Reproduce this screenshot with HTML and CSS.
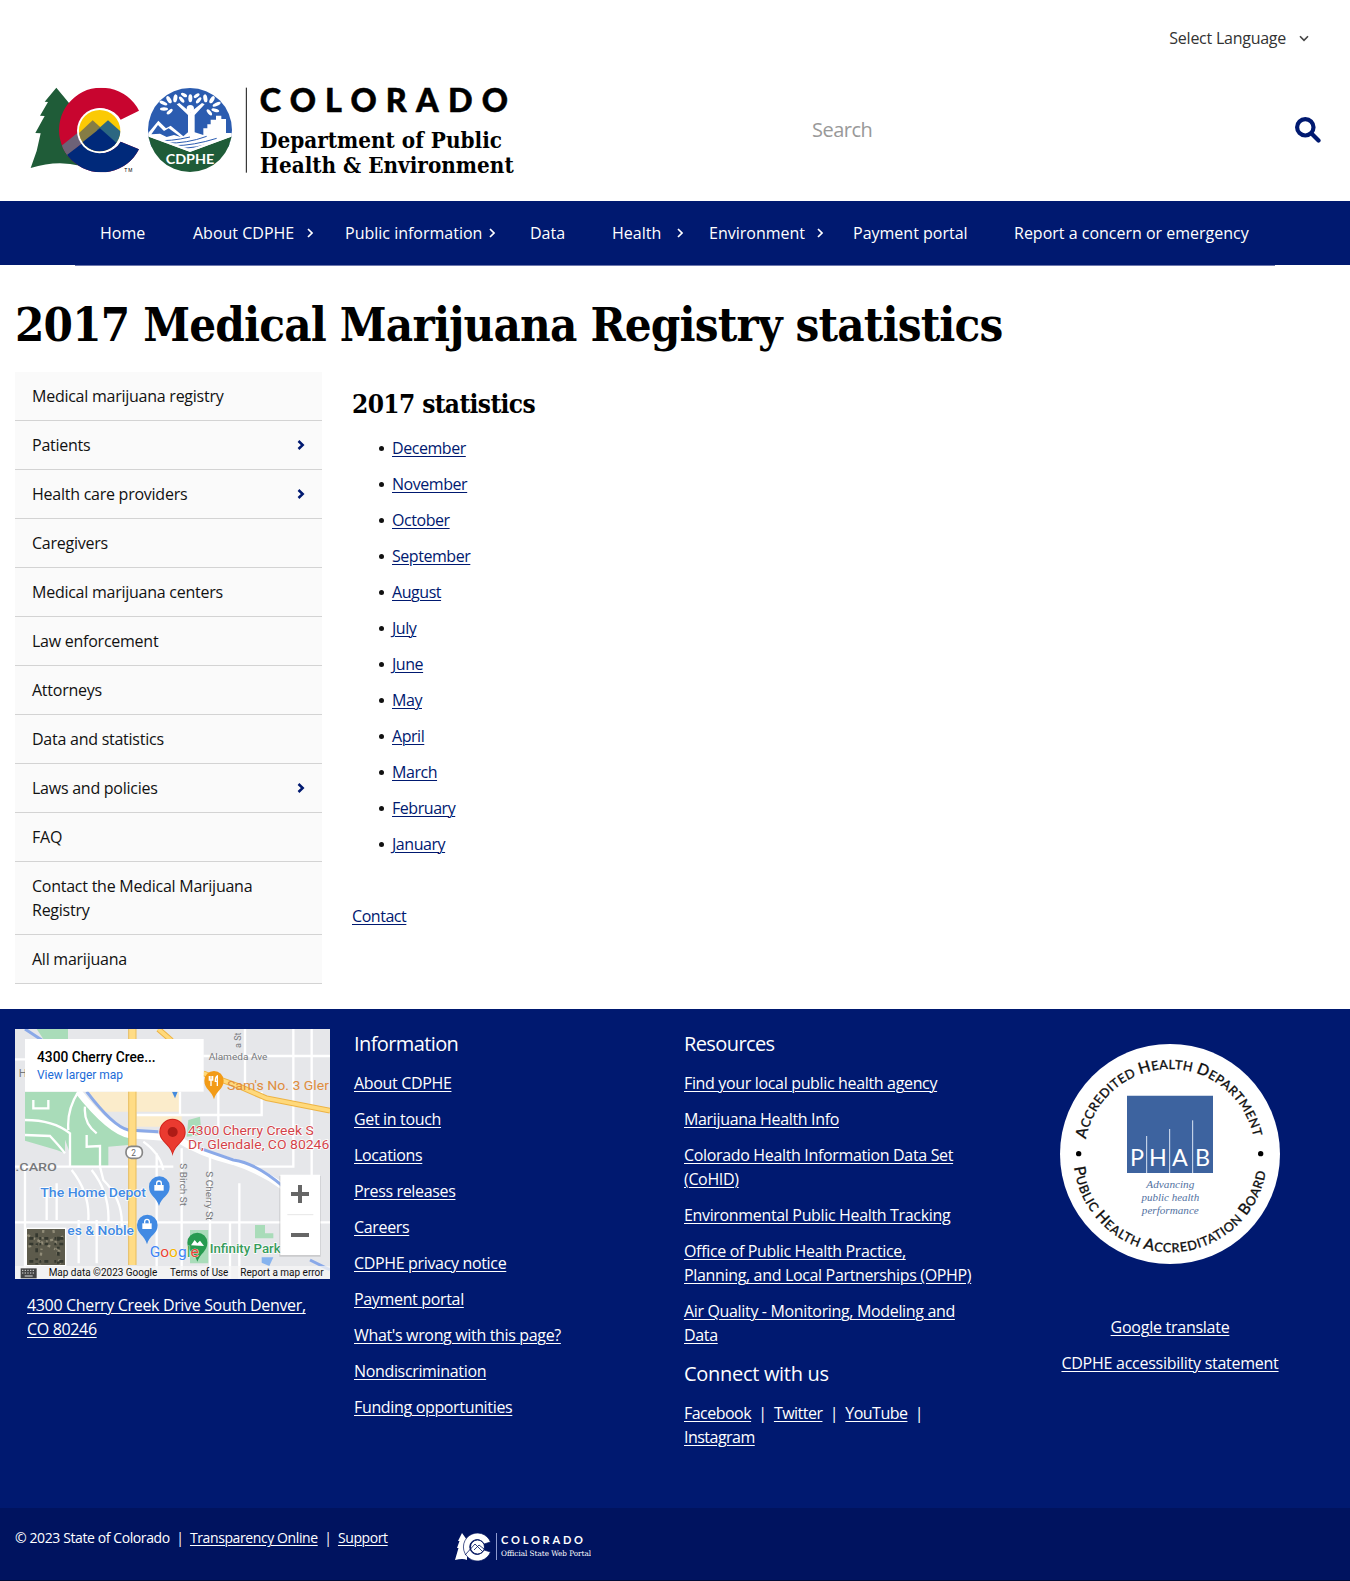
FILE: index.html
```html
<!DOCTYPE html>
<html lang="en">
<head>
<meta charset="utf-8">
<title>2017 Medical Marijuana Registry statistics</title>
<link rel="stylesheet" href="styles.css">
</head>
<body>
<header class="site-header">
  <div class="language">
    <span>Select Language</span>
    <svg class="chev-down" viewBox="0 0 10 7"><path d="M1 1.2 5 5.4 9 1.2"/></svg>
  </div>
  <div class="brand-row">
    <svg class="brand" viewBox="0 0 1500 330" role="img" aria-label="Colorado Department of Public Health and Environment">
      <defs>
        <clipPath id="cclip"><path d="M357 107A127 127 0 1 0 357 223L302 200A67 67 0 1 1 302 134Z"/></clipPath>
        <clipPath id="sun"><circle cx="239" cy="167" r="62"/></clipPath>
        <clipPath id="seal"><circle cx="510" cy="165" r="126"/></clipPath>
      </defs>
      <path fill="#1f5c38" d="M109 38 74 80 84 81 60 122 74 123 46 174 62 175 50 228 32 279Q110 254 180 272L210 160Z"/>
      <g clip-path="url(#cclip)">
        <rect x="100" y="30" width="270" height="270" fill="#c8052f"/>
        <path fill="#98526b" d="M110 230 218 136 250 170 142 242Z"/>
        <path fill="#6d6277" d="M110 224 190 160 200 190 142 242Z"/>
        <path fill="#00297a" d="M136 244 245 160 310 195H370V300H180Z"/>
      </g>
      <circle cx="239" cy="167" r="68" fill="#fff"/>
      <g clip-path="url(#sun)">
        <rect x="170" y="95" width="140" height="140" fill="#fbca04"/>
        <path fill="#857c45" d="M160 190 218 136 300 210 200 240Z"/>
        <path fill="#2c6781" d="M230 166 264 136 310 176 290 220Z"/>
        <path fill="#00297a" d="M174 212 240 160 310 222V250H174Z"/>
      </g>
      <text x="313" y="290" font-size="15" class="sans" textLength="24">TM</text>
      <g clip-path="url(#seal)">
        <rect x="380" y="35" width="260" height="180" fill="#2b5cb0"/>
        <path fill="#fff" d="M380 180 415 137 438 160 452 152 490 184 504 172V120L470 88 478 84 511 112 546 84 554 88 524 120V172L550 180V160H562V148H572V134H588V122H604V132H618V174H640V204L510 236 380 196Z"/>
        <path fill="#2b5cb0" d="M394 178 414 150 432 168 446 160 482 186 462 180 440 186 420 176Z"/>
        <circle cx="511" cy="101" r="11" fill="#fff"/>
        <g fill="#fff">
          <ellipse cx="432" cy="102" rx="12" ry="5"/><ellipse cx="430" cy="84" rx="13" ry="5" transform="rotate(25 430 84)"/><ellipse cx="447" cy="74" rx="12" ry="6" transform="rotate(60 447 74)"/><ellipse cx="466" cy="70" rx="12" ry="6" transform="rotate(100 466 70)"/><ellipse cx="449" cy="110" rx="11" ry="5" transform="rotate(-40 449 110)"/><ellipse cx="485" cy="74" rx="11" ry="5" transform="rotate(50 485 74)"/><ellipse cx="492" cy="60" rx="10" ry="5" transform="rotate(30 492 60)"/><ellipse cx="511" cy="70" rx="6" ry="12"/><ellipse cx="530" cy="62" rx="10" ry="5" transform="rotate(-35 530 62)"/><ellipse cx="536" cy="76" rx="11" ry="5" transform="rotate(-50 536 76)"/><ellipse cx="556" cy="70" rx="12" ry="6" transform="rotate(80 556 70)"/><ellipse cx="576" cy="74" rx="12" ry="6" transform="rotate(-60 576 74)"/><ellipse cx="590" cy="88" rx="13" ry="5" transform="rotate(-25 590 88)"/><ellipse cx="586" cy="106" rx="12" ry="5" transform="rotate(15 586 106)"/><ellipse cx="568" cy="112" rx="11" ry="5" transform="rotate(50 568 112)"/>
        </g>
        <path fill="none" stroke="#2b5cb0" stroke-width="3" d="M440 204Q500 206 560 184M462 212Q520 212 590 190M490 220Q530 218 570 206M410 196Q450 200 510 186"/>
        <path fill="#1f5c38" d="M380 182 510 230 640 182V300H380Z"/>
        <path fill="none" stroke="#fff" stroke-width="7" d="M380 179 510 227 640 179"/>
      </g>
      <text x="437" y="266" font-size="39" fill="#fff" class="geo" textLength="146" lengthAdjust="spacingAndGlyphs">CDPHE</text>
      <path stroke="#111" stroke-width="3" d="M679 38V293"/>
      <text x="719" y="111" font-size="97" class="geo heavy" textLength="745">COLORADO</text>
      <text x="720" y="218" font-size="66" class="slab" textLength="726" lengthAdjust="spacingAndGlyphs">Department of Public</text>
      <text x="720" y="293" font-size="66" class="slab" textLength="761" lengthAdjust="spacingAndGlyphs">Health &amp; Environment</text>
    </svg>
    <div class="search">
      <span>Search</span>
      <svg class="search-icon" viewBox="0 0 26 26"><circle cx="10.3" cy="10.3" r="8.2"/><path d="M16.5 16.5 23.5 23.5"/></svg>
    </div>
  </div>
</header>
<nav class="main-nav">
  <ul class="nav-list">
    <li>Home</li>
    <li>About CDPHE<svg class="arrow a1" viewBox="0 0 6 10"><path d="M1 1 5 5 1 9"/></svg></li>
    <li>Public information<svg class="arrow a2" viewBox="0 0 6 10"><path d="M1 1 5 5 1 9"/></svg></li>
    <li>Data</li>
    <li>Health<svg class="arrow a3" viewBox="0 0 6 10"><path d="M1 1 5 5 1 9"/></svg></li>
    <li>Environment<svg class="arrow a4" viewBox="0 0 6 10"><path d="M1 1 5 5 1 9"/></svg></li>
    <li>Payment portal</li>
    <li>Report a concern or emergency</li>
  </ul>
</nav>
<h1 class="title">2017 Medical Marijuana Registry statistics</h1>
<div class="columns">
  <ul class="side">
    <li>Medical marijuana registry</li>
    <li>Patients<svg class="side-arrow" viewBox="0 0 8 10"><path d="M1.5 1 5.7 5 1.5 9"/></svg></li>
    <li>Health care providers<svg class="side-arrow" viewBox="0 0 8 10"><path d="M1.5 1 5.7 5 1.5 9"/></svg></li>
    <li>Caregivers</li>
    <li>Medical marijuana centers</li>
    <li>Law enforcement</li>
    <li>Attorneys</li>
    <li>Data and statistics</li>
    <li>Laws and policies<svg class="side-arrow" viewBox="0 0 8 10"><path d="M1.5 1 5.7 5 1.5 9"/></svg></li>
    <li>FAQ</li>
    <li>Contact the Medical Marijuana<br>Registry</li>
    <li>All marijuana</li>
  </ul>
  <main class="content">
    <h2>2017 statistics</h2>
    <ul class="months">
      <li><a>December</a></li><li><a>November</a></li><li><a>October</a></li><li><a>September</a></li>
      <li><a>August</a></li><li><a>July</a></li><li><a>June</a></li><li><a>May</a></li>
      <li><a>April</a></li><li><a>March</a></li><li><a>February</a></li><li><a>January</a></li>
    </ul>
    <a>Contact</a>
  </main>
</div>
<footer class="footer">
  <div class="map-col">
    <svg class="map" viewBox="45 27 945 750">
      <rect x="45" y="27" width="945" height="750" fill="#e6e7ea"/>
      <path fill="#a9dcb9" d="M110 27H204V57H130ZM75 215H235L330 320 400 345 385 375 325 380V437H210V400L190 345H75ZM75 345H195V400L170 390 75 362ZM565 300 600 290 605 345 560 350ZM570 630H625V730H570ZM765 615H795V640H820V655H765Z"/>
      <path fill="#fbeccb" d="M260 215H540V275H300ZM410 285H545V320H410Z"/>
      <g fill="none" stroke="#fff" stroke-width="7">
        <path d="M45 118H75M610 108H990M540 215V285M410 285H785V215M655 200V330M735 27V200M880 27V440L760 440M45 440H520M45 607H990M545 385V777M718 490V777M935 27V480M75 440V777M140 500V600M170 490V600M236 600V730M290 600V730M785 240V285M470 400V777M630 400V777M690 607V777M100 240V265H145V240M235 215Q200 270 205 330M75 300Q160 300 210 340V437M75 345 150 348Q180 380 195 400M255 260Q250 310 290 340M260 345V380L300 378V437M300 440 310 480Q370 540 365 620M215 450Q270 520 265 600M275 450Q330 520 325 607M430 365Q480 400 490 450"/>
        <path stroke-width="20" d="M235 215Q330 335 390 345L530 355Q600 400 700 425 780 450 850 500"/>
      </g>
      <path fill="none" stroke="#8aa9e8" stroke-width="9" d="M75 27 140 70M260 215Q340 320 385 330L475 335M600 385 700 420Q770 430 850 500M930 720 990 750"/>
      <path fill="none" stroke="#e8bd5a" stroke-width="25" d="M397 27V735"/>
      <path fill="none" stroke="#ffdc85" stroke-width="19" d="M397 27V735"/>
      <path fill="none" stroke="#edb344" stroke-width="17" d="M475 27 515 62M610 160 720 200 800 235 990 272"/>
      <path fill="none" stroke="#ffd97b" stroke-width="11" d="M475 27 515 62M610 160 720 200 800 235 990 272"/>
      <rect x="378" y="379" width="49" height="36" rx="16" fill="#fff" stroke="#858585" stroke-width="5"/>
      <g class="rb">
        <text x="394" y="407" font-size="25" fill="#666">2</text>
        <g fill="#77797c">
          <text x="56" y="170" font-size="34">H</text>
          <text x="626" y="119" font-size="29" textLength="176" lengthAdjust="spacingAndGlyphs">Alameda Ave</text>
          <text transform="translate(722 84) rotate(-90)" font-size="27">a St</text>
          <text x="46" y="454" font-size="32" textLength="125" lengthAdjust="spacingAndGlyphs" class="med">.CARO</text>
          <text transform="translate(540 430) rotate(90)" font-size="27" textLength="128" lengthAdjust="spacingAndGlyphs">S Birch St</text>
          <text transform="translate(617 454) rotate(90)" font-size="27" textLength="147" lengthAdjust="spacingAndGlyphs">S Cherry St</text>
        </g>
        <text x="681" y="211" font-size="37" fill="#df8d3d" textLength="306" lengthAdjust="spacingAndGlyphs">Sam's No. 3 Gler</text>
        <g class="halo" fill="#d34349">
          <text x="564" y="345" font-size="40" textLength="377" lengthAdjust="spacingAndGlyphs">4300 Cherry Creek S</text>
          <text x="564" y="388" font-size="40" textLength="424" lengthAdjust="spacingAndGlyphs">Dr, Glendale, CO 80246</text>
        </g>
        <g class="halo med" fill="#418ae3">
          <text x="121" y="530" font-size="38" textLength="317" lengthAdjust="spacingAndGlyphs">The Home Depot</text>
          <text x="202" y="646" font-size="38" textLength="200" lengthAdjust="spacingAndGlyphs">es &amp; Noble</text>
        </g>
        <text x="629" y="698" font-size="38" fill="#369b5c" class="halo med" textLength="213" lengthAdjust="spacingAndGlyphs">Infinity Park</text>
      </g>
      <path fill="#d1231b" d="M518 408C512 372 478 368 478 336A39 39 0 0 1 557 336C557 368 524 372 518 408Z"/>
      <path fill="#ea3a30" d="M518 400C510 368 481 366 481 336A36 36 0 0 1 554 336C554 366 526 368 518 400Z"/>
      <circle cx="518" cy="336" r="15" fill="#ae1b16"/>
      <path fill="#f29b17" d="M642 238C636 212 613 208 613 182A29 29 0 0 1 671 182C671 208 648 212 642 238Z"/>
      <path fill="none" stroke="#fff" stroke-width="4" d="M628 168V180H638V168M633 168V198M652 198V168Q646 170 646 184H652"/>
      <path fill="#458bdd" d="M516 215H533L525 235Z"/>
      <g id="shop">
        <path fill="#418ae3" d="M477 558C470 530 447 528 447 500A31 31 0 0 1 509 500C509 528 484 530 477 558Z"/>
        <path fill="#fff" d="M463 495H491V512H463Z"/><path fill="none" stroke="#fff" stroke-width="4" d="M470 496V490A7 7 0 0 1 484 490V496"/>
      </g>
      <use href="#shop" x="-36" y="115"/>
      <path fill="#279b50" d="M592 725C586 700 562 694 562 668A30 30 0 0 1 622 668C622 694 600 700 592 725Z"/>
      <path fill="#fff" d="M573 676 584 660 592 670 600 662 612 678Z"/>
      <path fill="#86b3ee" d="M785 712H820L808 738 785 728Z"/>
      <rect x="75" y="57" width="536" height="158" fill="#fff"/>
      <g class="rb">
        <text x="111" y="126" font-size="42" class="med" textLength="356" lengthAdjust="spacingAndGlyphs">4300 Cherry Cree...</text>
        <text x="111" y="177" font-size="36" fill="#1a6bd8" textLength="258" lengthAdjust="spacingAndGlyphs">View larger map</text>
      </g>
      <path fill="#999" opacity=".35" d="M838 468H962V710H838Z"/>
      <path fill="#fff" d="M841 464H960V705H841Z"/>
      <path stroke="#e6e6e6" stroke-width="3" d="M862 584H940"/>
      <path stroke="#666" stroke-width="12" d="M873 522H927M900 495V549M873 645H927"/>
      <rect x="76" y="623" width="123" height="115" fill="#fff"/>
      <rect x="81" y="627" width="114" height="108" fill="#5d5b4c"/>
      <g stroke="#918c78" stroke-width="7" fill="none" stroke-dasharray="9 13 4 8"><path d="M82 645 190 700M130 630 120 733M85 680 190 650M160 630 180 733"/></g>
      <g stroke="#35382f" stroke-width="8" fill="none" stroke-dasharray="12 18 6 9"><path d="M88 655H190M88 672H190M88 724H190M110 640V733M175 650V733"/></g>
      <g class="rb" font-size="46" stroke="#fff" stroke-width="2" paint-order="stroke"><text x="449" y="711" textLength="147" lengthAdjust="spacingAndGlyphs"><tspan fill="#4285f4">G</tspan><tspan fill="#ea4335">o</tspan><tspan fill="#f4b400">o</tspan><tspan fill="#4285f4">g</tspan><tspan fill="#34a853">l</tspan><tspan fill="#ea4335">e</tspan></text></g>
      <rect x="45" y="738" width="945" height="39" fill="#f5f5f5" opacity=".75"/>
      <path fill="#444" d="M62 745H110V775H62Z"/><path stroke="#ddd" stroke-width="3" stroke-dasharray="4 4" d="M66 751H106M66 759H106"/><path stroke="#ddd" stroke-width="3" d="M74 768H98"/>
      <g class="rb" font-size="30" fill="#111">
        <text x="146" y="768" textLength="326" lengthAdjust="spacingAndGlyphs">Map data ©2023 Google</text>
        <text x="510" y="768" textLength="175" lengthAdjust="spacingAndGlyphs">Terms of Use</text>
        <text x="721" y="768" textLength="250" lengthAdjust="spacingAndGlyphs">Report a map error</text>
      </g>
    </svg>
    <p class="address"><a>4300 Cherry Creek Drive South Denver,</a><br><a>CO 80246</a></p>
  </div>
  <div class="links">
    <h3>Information</h3>
    <p><a>About CDPHE</a></p><p><a>Get in touch</a></p><p><a>Locations</a></p><p><a>Press releases</a></p><p><a>Careers</a></p>
    <p><a>CDPHE privacy notice</a></p><p><a>Payment portal</a></p><p><a>What's wrong with this page?</a></p><p><a>Nondiscrimination</a></p><p><a>Funding opportunities</a></p>
  </div>
  <div class="links">
    <h3>Resources</h3>
    <p><a>Find your local public health agency</a></p>
    <p><a>Marijuana Health Info</a></p>
    <p><a>Colorado Health Information Data Set<br>(CoHID)</a></p>
    <p><a>Environmental Public Health Tracking</a></p>
    <p><a>Office of Public Health Practice,<br>Planning, and Local Partnerships (OPHP)</a></p>
    <p><a>Air Quality - Monitoring, Modeling and<br>Data</a></p>
    <h3 class="connect">Connect with us</h3>
    <p class="social"><a>Facebook</a>&nbsp; | &nbsp;<a>Twitter</a>&nbsp; | &nbsp;<a>YouTube</a>&nbsp; |<br><a>Instagram</a></p>
  </div>
  <div class="accredit">
    <svg class="phab" viewBox="60 42 660 660">
      <defs>
        <path id="top" d="M138 328A256 256 0 0 1 642 328"/>
        <path id="bottom" d="M102 412A291 291 0 0 0 680 408"/>
      </defs>
      <circle cx="390" cy="372" r="330" fill="#fff"/>
      <g class="ring" font-size="38">
        <text textLength="706"><textPath href="#top" textLength="706"><tspan class="cap">A</tspan>CCREDITED <tspan class="cap">H</tspan>EALTH <tspan class="cap">D</tspan>EPARTMENT</textPath></text>
        <text><textPath href="#bottom" textLength="828"><tspan class="cap">P</tspan>UBLIC <tspan class="cap">H</tspan>EALTH <tspan class="cap">A</tspan>CCREDITATION <tspan class="cap">B</tspan>OARD</textPath></text>
      </g>
      <circle cx="116" cy="371" r="8"/><circle cx="662" cy="371" r="8"/>
      <path fill="#3d639f" d="M261 197H519V429H261Z"/>
      <path stroke="#dbe5f3" stroke-width="3" d="M320 318V429M389 297V429M458 271V429"/>
      <g font-size="70" fill="#fff" class="geo light"><text x="270" y="407">P</text><text x="327" y="407">H</text><text x="396" y="407">A</text><text x="465" y="407">B</text></g>
      <g font-size="33" fill="#52719f" class="tag" text-anchor="middle"><text x="391" y="475" textLength="144" lengthAdjust="spacingAndGlyphs">Advancing</text><text x="391" y="513" textLength="173" lengthAdjust="spacingAndGlyphs">public health</text><text x="391" y="552" textLength="171" lengthAdjust="spacingAndGlyphs">performance</text></g>
    </svg>
    <p><a>Google translate</a></p>
    <p><a>CDPHE accessibility statement</a></p>
  </div>
</footer>
<div class="bottom">
  <p>© 2023 State of Colorado&nbsp; | &nbsp;<a>Transparency Online</a>&nbsp; | &nbsp;<a>Support</a></p>
  <svg class="portal" viewBox="0 0 136 30">
    <path fill="#fff" d="M7 1 3 9H4.500L2 16H3.500L0 28Q8 26 12 28L12 8Z"/>
    <path fill="#fff" stroke="#00135f" stroke-width=".7" d="M35.500 10A14 14 0 1 0 35.500 20L29 18A7.500 7.500 0 1 1 29 12Z"/>
    <circle cx="22.500" cy="15" r="7" fill="#fff" stroke="#00135f" stroke-width=".9"/>
    <path fill="none" stroke="#00135f" stroke-width=".8" d="M10 23 20 12 28 20M19 18 24 13 29 17"/>
    <path stroke="#8d99cf" stroke-width="1" d="M41.500 1V28"/>
    <text x="46" y="12" font-size="11" fill="#fff" class="geo" textLength="82">COLORADO</text>
    <text x="46" y="24" font-size="7.500" fill="#fff" class="slab soft" textLength="90" lengthAdjust="spacingAndGlyphs">Official State Web Portal</text>
  </svg>
</div>
</body>
</html>
```
FILE: styles.css
```css
* { box-sizing: border-box; }
body { margin: 0; width: 1350px; background: #fff; color: #111; font: 400 16px/24px "Open Sans", sans-serif; letter-spacing: -.25px; }
ul, p, h1, h2, h3 { margin: 0; padding: 0; }
ul { list-style: none; }
svg { display: block; flex: none; letter-spacing: 0; }
a { text-decoration: underline; text-underline-offset: 2px; text-decoration-thickness: 1px; }

.site-header { height: 201px; }
.language { height: 75px; padding: 1px 41px 0 0; display: flex; justify-content: flex-end; align-items: center; gap: 13px; color: #333; }
.chev-down { width: 10px; height: 7px; fill: none; stroke: #444; stroke-width: 1.6; }
.brand-row { display: flex; padding-left: 20px; }
.brand { width: 500px; height: 110px; }
.search { width: 509px; height: 110px; margin-left: 292px; display: flex; justify-content: space-between; align-items: center; font-size: 20px; letter-spacing: -.5px; color: #999; }
.search-icon { width: 26px; height: 26px; fill: none; stroke: #001970; stroke-width: 4.2; stroke-linecap: round; }

.sans { font-family: "Liberation Sans", sans-serif; }
.geo { font-family: Lato, sans-serif; font-weight: 700; }
.heavy { font-weight: 900; stroke: #000; stroke-width: 1.5px; }
.light { font-weight: 400; }
.slab { font-family: "DejaVu Serif Condensed", "DejaVu Serif", serif; font-weight: 700; }
.soft { font-weight: 400; }

.main-nav { height: 64px; background: #001970; color: #fff; display: flex; justify-content: center; }
.nav-list { width: 1200px; height: 65px; padding-left: 1px; border-bottom: 1px solid #6d77ad; display: grid; grid-template-columns: 93px 152px 185px 82px 97px 144px 161px 284px; align-items: center; letter-spacing: 0; }
.nav-list li { padding-left: 24px; display: flex; align-items: center; white-space: nowrap; }
.arrow { width: 6px; height: 10px; fill: none; stroke: #fff; stroke-width: 1.7; }
.a1 { margin-left: 13px; }
.a2 { margin-left: 7px; }
.a3 { margin-left: 16px; }
.a4 { margin-left: 12px; }

.title { height: 107px; padding: 28px 15px 0; font: 700 47px/64px "DejaVu Serif Condensed", "DejaVu Serif", serif; letter-spacing: -.83px; color: #000; white-space: nowrap; }
.columns { display: flex; height: 637px; padding-left: 15px; gap: 30px; }
.side { width: 307px; height: 612px; background: #fafafa; }
.side li { padding: 12px 17px; border-bottom: 1px solid #d3d3d3; display: flex; justify-content: space-between; align-items: center; }
.side-arrow { width: 8px; height: 10px; fill: none; stroke: #001970; stroke-width: 2.5; }
.content { padding-top: 14px; color: #001970; letter-spacing: -.45px; }
.content h2 { height: 44px; font: 700 26px/36px "DejaVu Serif Condensed", "DejaVu Serif", serif; letter-spacing: -.62px; color: #000; }
.months { padding: 6px 0 36px 27px; }
.months li { margin-bottom: 12px; display: flex; align-items: center; gap: 8px; }
.months li::before { content: ""; width: 5px; height: 5px; border-radius: 50%; background: #111; }

.footer { height: 499px; padding: 20px 0 0 15px; background: #001970; color: #fff; display: flex; letter-spacing: -.34px; }
.map-col { width: 339px; }
.map { width: 315px; height: 250px; }
.address { padding: 14px 0 0 12px; white-space: nowrap; }
.rb { font-family: Roboto, sans-serif; }
.med { font-weight: 500; }
.halo { stroke: #fff; stroke-width: 4px; paint-order: stroke; }
.links { width: 330px; white-space: nowrap; }
.links h3 { height: 42px; font-size: 20px; line-height: 30px; font-weight: 400; letter-spacing: -.6px; }
.links p { margin-bottom: 12px; }
.links .connect { height: 42px; letter-spacing: -.3px; }
.links .social { letter-spacing: -.52px; }
.accredit { width: 312px; padding: 15px 0 0; display: flex; flex-direction: column; align-items: center; letter-spacing: -.26px; }
.phab { width: 220px; height: 220px; margin-bottom: 51px; }
.accredit p { margin-bottom: 12px; white-space: nowrap; }
.ring { font-family: Lato, sans-serif; font-weight: 500; fill: #111; stroke: #111; stroke-width: .8px; }
.cap { font-size: 47px; }
.tag { font-family: "Liberation Serif", serif; font-style: italic; }

.bottom { height: 73px; padding: 24px 0 0 15px; background: #00135f; color: #fff; display: flex; border-bottom: 1px solid #000b38; }
.bottom p { width: 440px; font-size: 14px; line-height: 12px; letter-spacing: -.4px; white-space: nowrap; }
.portal { width: 136px; height: 30px; }
```
